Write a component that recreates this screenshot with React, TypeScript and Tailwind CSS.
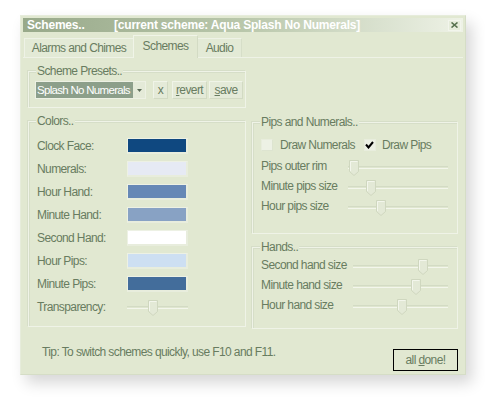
import React from "react";

const BG = "bg-[#e1e8d1]";

function Group({
  label,
  className,
  children,
}: {
  label: string;
  className?: string;
  children?: React.ReactNode;
}) {
  return (
    <div
      className={`relative border border-[#eff3e7] shadow-[inset_1px_1px_0_#d6dec8,-1px_-1px_0_#d6dec8] ${className ?? ""}`}
    >
      <div className={`absolute left-[7px] top-[-8px] px-[1px] leading-[14px] ${BG}`}>{label}</div>
      {children}
    </div>
  );
}

function Slider({ className, thumb }: { className: string; thumb: number }) {
  return (
    <div className={`relative h-[16px] ${className}`}>
      <div className="absolute left-0 right-0 top-[6px] h-[3px] border-t border-t-[#d3dbc4] border-b border-b-[#f3f6ec] bg-[#dfe6cf]" />
      <svg
        className="absolute top-0"
        style={{ left: thumb }}
        width="10"
        height="16"
        viewBox="0 0 10 16"
      >
        <path d="M0.5 0.5 H9.5 V11.5 L5 15.5 L0.5 11.5 Z" fill="#e3e9d6" stroke="#cfd7bf" />
        <path d="M1.5 1.5 V11 M1.5 1.5 H8.5" stroke="#f3f6ec" fill="none" />
      </svg>
    </div>
  );
}

function ColorRow({ label, color }: { label: string; color: string }) {
  return (
    <div className="flex h-[23px] items-center">
      <div className="w-[90px] leading-[14px]">{label}</div>
      <div className="h-[16px] w-[61px] border border-[#edf1e4] border-r-2 border-b-2 border-r-[#e8eddd] border-b-[#e8eddd]">
        <div className="h-full w-full" style={{ backgroundColor: color }} />
      </div>
    </div>
  );
}

function SliderRow({
  label,
  labelW,
  trackW,
  thumb,
}: {
  label: string;
  labelW: string;
  trackW: string;
  thumb: number;
}) {
  return (
    <div className="flex h-[20px] items-center">
      <div className={`${labelW} leading-[14px]`}>{label}</div>
      <Slider className={`${trackW} mt-[3px]`} thumb={thumb} />
    </div>
  );
}

function Btn({ children, className }: { children: React.ReactNode; className?: string }) {
  return (
    <div
      className={`flex h-[18px] items-center justify-center border border-t-[#f0f4e8] border-l-[#f0f4e8] border-r-[#d2dac3] border-b-[#d2dac3] bg-[#e4ead8] leading-[14px] ${className ?? ""}`}
    >
      {children}
    </div>
  );
}

export default function App() {
  return (
    <div className="h-[398px] w-[485px] bg-white pl-[20px] pt-[15px] font-['Liberation_Sans',Arial,sans-serif] text-[12px] tracking-[-0.6px] text-[#687c60]">
      <div
        className={`flex h-[360px] w-[446px] flex-col border border-[#d5ddc6] border-t-[#e6ecdb] border-l-[#e6ecdb] p-[2px] shadow-[6px_8px_14px_rgba(0,0,0,0.16)] ${BG}`}
      >
        {/* title bar */}
        <div className="flex h-[14px] items-center bg-gradient-to-r from-[#98a98a] via-[#b9c7ab] to-[#eef2e6] pl-[4px] pr-[2px] text-[12px] font-bold leading-[14px] tracking-[-0.2px] text-white">
          <span className="w-[87px]">Schemes..</span>
          <span className="flex-1">[current scheme: Aqua Splash No Numerals]</span>
          <div className="flex h-[11px] w-[13px] items-center justify-center border border-[#f2f5ec] bg-[#e6ecdb]">
            <svg width="7" height="6" viewBox="0 0 7 6">
              <path d="M0.5 0.5 L6.5 5.5 M6.5 0.5 L0.5 5.5" stroke="#56704d" strokeWidth="1.6" />
            </svg>
          </div>
        </div>

        {/* tabs */}
        <div className="flex h-[25px] items-end pl-[1px]">
          <div className="flex h-[19px] w-[109px] items-center justify-center border-l border-t border-[#eef2e6] bg-[#e3ead6] leading-[14px]">
            Alarms and Chimes
          </div>
          <div
            className={`relative z-10 -mb-px flex h-[23px] w-[65px] items-center justify-center border-l border-r border-t border-l-[#f0f4e8] border-t-[#f0f4e8] border-r-[#d3dbc4] pb-[2px] leading-[14px] ${BG}`}
          >
            Schemes
          </div>
          <div className="flex h-[19px] w-[44px] items-center justify-center border-r border-t border-t-[#eef2e6] border-r-[#d6dec8] bg-[#e3ead6] leading-[14px]">
            Audio
          </div>
        </div>

        {/* panel */}
        <div className="flex flex-1 flex-col border-t border-[#eef2e6] pl-[5px] pt-[13px]">
          <Group label="Scheme Presets.." className="w-[218px] pb-[8px] pt-[9px]">
            <div className="flex items-center pl-[6px]">
              <div className="flex h-[18px] w-[111px] border border-[#edf1e4]">
                <div className="flex-1 overflow-hidden whitespace-nowrap bg-[#8c9f8a] pl-[1px] text-[11.5px] leading-[16px] tracking-[-0.7px] text-white">
                  Splash No Numerals
                </div>
                <div className="flex w-[12px] items-center justify-center bg-[#e4ead8]">
                  <svg width="5" height="3" viewBox="0 0 5 3">
                    <path d="M0 0 H5 L2.5 3 Z" fill="#5a6a57" />
                  </svg>
                </div>
              </div>
              <Btn className="ml-[7px] w-[15px]">x</Btn>
              <Btn className="ml-[4px] w-[35px]">
                <span>
                  <span className="underline">r</span>evert
                </span>
              </Btn>
              <Btn className="ml-[2px] w-[34px]">
                <span>
                  <span className="underline">s</span>ave
                </span>
              </Btn>
            </div>
          </Group>

          <div className="mt-[13px] flex items-start">
            <Group label="Colors.." className="w-[218px] pb-[8px] pl-[8px] pt-[12px]">
              <ColorRow label="Clock Face:" color="#0f4880" />
              <ColorRow label="Numerals:" color="#e6eaf4" />
              <ColorRow label="Hour Hand:" color="#6688b6" />
              <ColorRow label="Minute Hand:" color="#88a2c4" />
              <ColorRow label="Second Hand:" color="#ffffff" />
              <ColorRow label="Hour Pips:" color="#cddff2" />
              <ColorRow label="Minute Pips:" color="#436d9b" />
              <div className="flex h-[23px] items-center">
                <div className="w-[90px] leading-[14px]">Transparency:</div>
                <Slider className="mt-[2px] w-[61px]" thumb={21} />
              </div>
            </Group>

            <div className="ml-[6px] mt-[1px] flex w-[206px] flex-col">
              <Group label="Pips and Numerals.." className="pb-[17px] pl-[8px] pt-[11px]">
                <div className="flex h-[22px] items-center">
                  <div className="h-[12px] w-[12px] border border-[#e8eddd] border-r-[#dde4d0] border-b-[#dde4d0] bg-[#edf1e5]" />
                  <span className="ml-[7px] leading-[14px]">Draw Numerals</span>
                  <div className="ml-[9px] flex h-[12px] w-[12px] items-center justify-center border border-[#e8eddd] bg-[#edf1e5]">
                    <svg width="9" height="8" viewBox="0 0 9 8">
                      <path d="M1 3.5 L3.5 6.5 L8 1" stroke="#000" strokeWidth="2" fill="none" />
                    </svg>
                  </div>
                  <span className="ml-[6px] leading-[14px]">Draw Pips</span>
                </div>
                <SliderRow label="Pips outer rim" labelW="w-[87px]" trackW="w-[100px]" thumb={1} />
                <SliderRow label="Minute pips size" labelW="w-[87px]" trackW="w-[100px]" thumb={18} />
                <SliderRow label="Hour pips size" labelW="w-[87px]" trackW="w-[100px]" thumb={28} />
              </Group>

              <Group label="Hands.." className="mt-[13px] pb-[13px] pl-[8px] pt-[7px]">
                <SliderRow label="Second hand size" labelW="w-[92px]" trackW="w-[95px]" thumb={65} />
                <SliderRow label="Minute hand size" labelW="w-[92px]" trackW="w-[95px]" thumb={58} />
                <SliderRow label="Hour hand size" labelW="w-[92px]" trackW="w-[95px]" thumb={44} />
              </Group>
            </div>
          </div>

          <div className="mt-[16px] flex items-start justify-between pl-[14px] pr-[5px]">
            <div className="leading-[14px]">Tip: To switch schemes quickly, use F10 and F11.</div>
            <div className="mt-[4px] flex h-[22px] w-[65px] items-center justify-center border border-black leading-[14px]">
              <span>
                all <span className="underline">d</span>one!
              </span>
            </div>
          </div>
        </div>
      </div>
    </div>
  );
}
